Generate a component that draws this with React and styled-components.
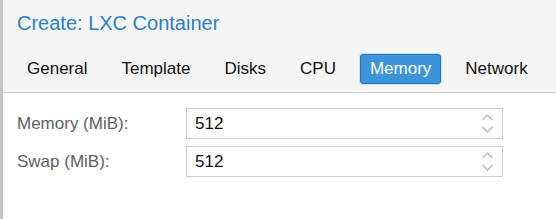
import React from 'react';
import styled, {createGlobalStyle} from "styled-components";

const GlobalStyle = createGlobalStyle`
  html, body {
    margin: 0;
    padding: 0;
    background: #ffffff;
    font-family: "Liberation Sans", Arial, sans-serif;
  }
`

const tabs = ['General', 'Template', 'Disks', 'CPU', 'Memory', 'Network']

const fields = [
    {label: 'Memory (MiB):', value: '512'},
    {label: 'Swap (MiB):', value: '512'},
]

function Spinner() {
    return (
        <SpinIcon width="13" height="21" viewBox="0 0 13 21">
            <polyline points="1.5,7 6.5,2 11.5,7" />
            <polyline points="1.5,14 6.5,19 11.5,14" />
        </SpinIcon>
    )
}

export default function App() {
    return (
        <>
            <GlobalStyle/>
            <Window>
                <Header>
                    <Title>Create: LXC Container</Title>
                    <TabBar>
                        {tabs.map(t => (
                            <Tab key={t} $active={t === 'Memory'}>{t}</Tab>
                        ))}
                    </TabBar>
                </Header>
                <Body>
                    {fields.map(f => (
                        <Row key={f.label}>
                            <Label>{f.label}</Label>
                            <Field>
                                <Value>{f.value}</Value>
                                <Spinner/>
                            </Field>
                        </Row>
                    ))}
                </Body>
            </Window>
        </>
    );
}

const Window = styled.div`
  width: 556px;
  height: 219px;
  box-sizing: border-box;
  border-left: 3px solid #c4c4c4;
  background: #ffffff;
  display: flex;
  flex-direction: column;
`

const Header = styled.div`
  background: #f5f5f5;
  border-bottom: 1px solid #d2d2d2;
  padding: 11px 0 8px 14px;
  height: 93px;
  box-sizing: border-box;
`

const Title = styled.div`
  font-size: 20px;
  line-height: 24px;
  color: #2c80c8;
`

const TabBar = styled.div`
  display: flex;
  gap: 14px;
  margin-top: 19px;
`

const Tab = styled.div`
  height: 30px;
  box-sizing: border-box;
  padding: 0 9px;
  display: flex;
  align-items: center;
  font-size: 17px;
  border-radius: 3px;
  border: 1px solid ${p => p.$active ? '#1e78c8' : 'transparent'};
  background: ${p => p.$active ? '#3d94d8' : 'transparent'};
  color: ${p => p.$active ? '#ffffff' : '#111111'};
  box-shadow: ${p => p.$active ? '0 0 0 1px #cfe3f4' : 'none'};
`

const Body = styled.div`
  padding: 15px 0 0 14px;
  display: flex;
  flex-direction: column;
  gap: 7px;
`

const Row = styled.div`
  display: flex;
  align-items: center;
`

const Label = styled.div`
  width: 169px;
  font-size: 17px;
  color: #606060;
`

const Field = styled.div`
  width: 317px;
  height: 31px;
  box-sizing: border-box;
  border: 1px solid #cfcfcf;
  display: flex;
  align-items: center;
  justify-content: space-between;
  padding: 0 8px 0 8px;
`

const Value = styled.span`
  font-size: 17px;
  color: #111111;
`

const SpinIcon = styled.svg`
  fill: none;
  stroke: #bcbcbc;
  stroke-width: 1.5;
`
